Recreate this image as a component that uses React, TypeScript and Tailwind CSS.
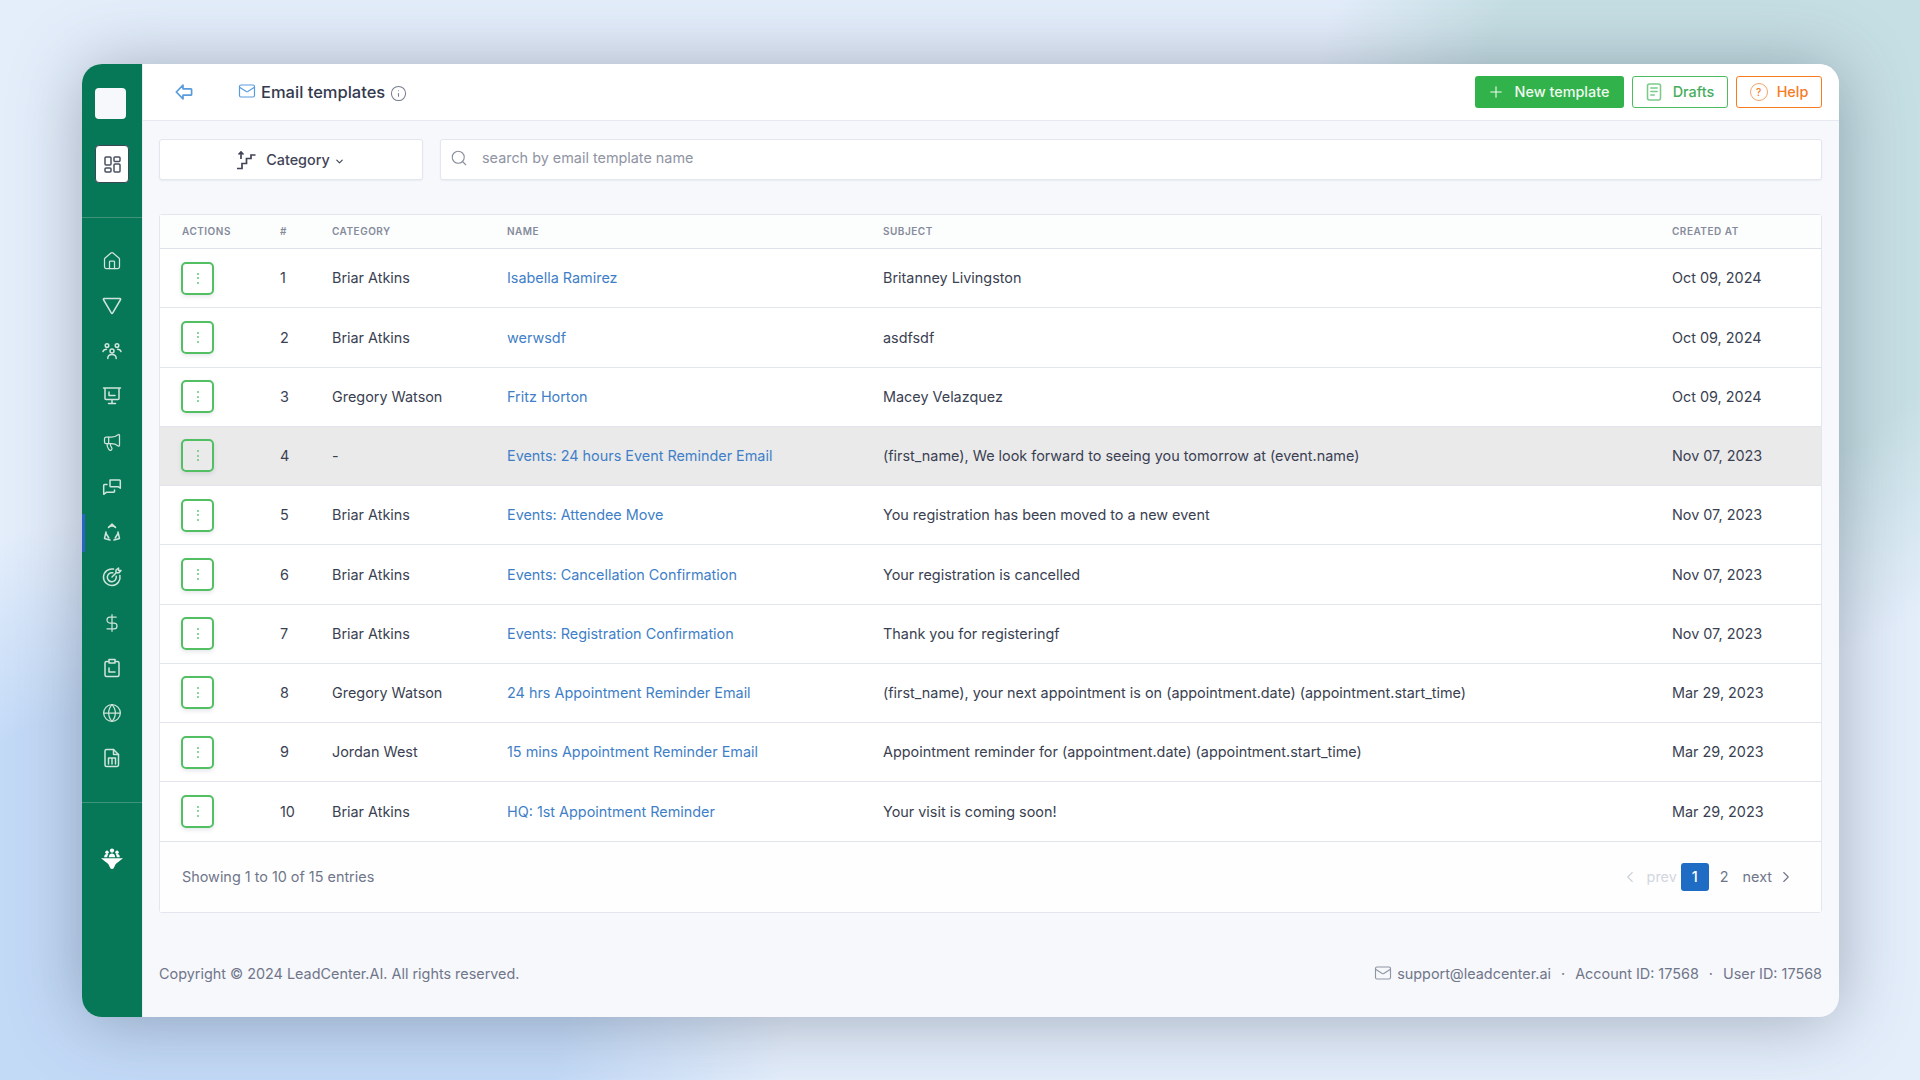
import { ChevronDown, ChevronLeft, ChevronRight, DollarSign, Globe, House, Info, Mail, Megaphone, Plus, Search } from 'lucide-react';

type Row = { id: number; category: string; name: string; subject: string; created: string; active?: boolean };

const ROWS: Row[] = [
  { id: 1, category: 'Briar Atkins', name: 'Isabella Ramirez', subject: 'Britanney Livingston', created: 'Oct 09, 2024' },
  { id: 2, category: 'Briar Atkins', name: 'werwsdf', subject: 'asdfsdf', created: 'Oct 09, 2024' },
  { id: 3, category: 'Gregory Watson', name: 'Fritz Horton', subject: 'Macey Velazquez', created: 'Oct 09, 2024' },
  { id: 4, category: '-', name: 'Events: 24 hours Event Reminder Email', subject: '(first_name), We look forward to seeing you tomorrow at (event.name)', created: 'Nov 07, 2023', active: true },
  { id: 5, category: 'Briar Atkins', name: 'Events: Attendee Move', subject: 'You registration has been moved to a new event', created: 'Nov 07, 2023' },
  { id: 6, category: 'Briar Atkins', name: 'Events: Cancellation Confirmation', subject: 'Your registration is cancelled', created: 'Nov 07, 2023' },
  { id: 7, category: 'Briar Atkins', name: 'Events: Registration Confirmation', subject: 'Thank you for registeringf', created: 'Nov 07, 2023' },
  { id: 8, category: 'Gregory Watson', name: '24 hrs Appointment Reminder Email', subject: '(first_name), your next appointment is on (appointment.date) (appointment.start_time)', created: 'Mar 29, 2023' },
  { id: 9, category: 'Jordan West', name: '15 mins Appointment Reminder Email', subject: 'Appointment reminder for (appointment.date) (appointment.start_time)', created: 'Mar 29, 2023' },
  { id: 10, category: 'Briar Atkins', name: 'HQ: 1st Appointment Reminder', subject: 'Your visit is coming soon!', created: 'Mar 29, 2023' },
];

const COLS = 'grid grid-cols-[98px_52px_175px_376px_789px_1fr] pl-[22px] items-center';

const stroke = { fill: 'none', stroke: 'currentColor', strokeWidth: 1.5, strokeLinecap: 'round', strokeLinejoin: 'round' } as const;

const TriangleIcon = () => (
  <svg width="20" height="18" viewBox="0 0 20 18" {...stroke}><path d="M2 1.500h16a.7.7 0 0 1 .6 1l-8 13.600a.7.7 0 0 1-1.200 0l-8-13.600a.7.7 0 0 1 .6-1z" /></svg>
);
const TeamIcon = () => (
  <svg width="20" height="18" viewBox="0 0 20 18" {...stroke}>
    <circle cx="5" cy="3.500" r="1.800" /><circle cx="15" cy="3.500" r="1.800" /><circle cx="10" cy="9" r="2" />
    <path d="M1 9.500c.5-1.500 1.800-2.300 3.500-2.300M19 9.500c-.5-1.500-1.800-2.300-3.500-2.300M5.800 16.500c0-2.500 1.800-4 4.200-4s4.200 1.500 4.200 4" />
  </svg>
);
const ScreenIcon = () => (
  <svg width="20" height="20" viewBox="0 0 20 20" {...stroke}>
    <path d="M1.500 2h17M3 2v10.500a1 1 0 0 0 1 1h12a1 1 0 0 0 1-1V2M10 13.500V17M6.500 17.500h7M7 6v3.500h6" />
  </svg>
);
const ChatIcon = () => (
  <svg width="20" height="20" viewBox="0 0 20 20" {...stroke}>
    <path d="M8 3h9.500a.8.800 0 0 1 .8.800v7.400l-2.300-1.500H8.800a.8.800 0 0 1-.8-.8z" />
    <path d="M5 7.500H2.500a.8.800 0 0 0-.8.800v9l2.600-2h7.400a.8.800 0 0 0 .8-.8v-1.500" />
  </svg>
);
const RecycleIcon = () => (
  <svg width="20" height="20" viewBox="0 0 20 20" {...stroke}>
    <path d="M6.500 5.500 10 2l3.500 3.500M4 10l-1.500 6.500L8 18M16 10l1.500 6.500L12 18" />
    <path d="M7 4.800c1.800-.9 4.200-.9 6 0M4 11.500 6.800 16M16 11.500 13.200 16" />
  </svg>
);
const TargetIcon = () => (
  <svg width="20" height="20" viewBox="0 0 20 20" {...stroke}>
    <path d="M11.500 2.100A8.300 8.300 0 1 0 17.900 8.500M10.800 5.800A4.500 4.500 0 1 0 14.200 9.200" />
    <path d="M10 10l4.500-4.500M14 3v2.800h3l2-2.300h-2.500V1z" />
  </svg>
);
const ClipboardIcon = () => (
  <svg width="18" height="20" viewBox="0 0 18 20" {...stroke}>
    <path d="M5.500 3.500H3.500a1.500 1.500 0 0 0-1.500 1.500v12a1.500 1.500 0 0 0 1.500 1.500h11a1.500 1.500 0 0 0 1.500-1.500V5a1.500 1.500 0 0 0-1.500-1.500h-2" />
    <path d="M6 1.500h6v3.500H6zM6 10v4h6" />
  </svg>
);
const SheetIcon = () => (
  <svg width="18" height="20" viewBox="0 0 18 20" {...stroke}>
    <path d="M3.500 1.500h7l5 5v10.500a1.500 1.500 0 0 1-1.500 1.500H3.500a1.500 1.500 0 0 1-1.500-1.500V3a1.500 1.500 0 0 1 1.500-1.500z" />
    <path d="M10.500 1.500v5h5M5.500 16V10h7v6M9 10v6" />
  </svg>
);
const LogoIcon = () => (
  <svg width="22" height="21" viewBox="0 0 22 21" fill="white">
    <circle cx="11" cy="2.600" r="2.100" /><circle cx="6" cy="4.300" r="1.700" /><circle cx="16" cy="4.300" r="1.700" />
    <path d="M7.800 9.300c0-2.600 1.400-3.900 3.200-3.900s3.200 1.300 3.200 3.900zM3.200 9.300c0-2 1-3.200 2.700-3.200.5 0 1 .1 1.300.3-.7.800-1 1.800-1 2.900zM18.800 9.300c0-2-1-3.200-2.700-3.200-.5 0-1 .1-1.300.3.700.8 1 1.800 1 2.900z" />
    <path d="M0 10.300h22l-7.300 5.700-2.200 4.500-1.500.5-1.500-.5L7.300 16z" />
  </svg>
);
const BackArrow = () => (
  <svg width="18" height="16" viewBox="0 0 18 16" fill="none" stroke="#5a9bdc" strokeWidth="1.700" strokeLinejoin="round">
    <path d="M8 1.200 1.300 8 8 14.800v-3.600h7.800a.8.800 0 0 0 .8-.8V5.600a.8.800 0 0 0-.8-.8H8z" />
  </svg>
);
const StairsIcon = () => (
  <svg width="20" height="20" viewBox="0 0 20 20" fill="none" stroke="#3f4456" strokeWidth="1.700">
    <path d="M1 18.500h5v-5h4.500v-5H15V5h4.500" /><path d="M5 9V2M2.500 4.500 5 2l2.500 2.500" />
  </svg>
);
const DraftIcon = () => (
  <svg width="16" height="18" viewBox="0 0 16 18" fill="none" stroke="#7ccb8a" strokeWidth="1.600" strokeLinecap="round">
    <rect x="1.500" y="1" width="13" height="16" rx="2" /><path d="M4.800 5h6.400M4.800 8.500h6.400M4.800 12h3.500" />
  </svg>
);
const DotsButton = () => (
  <button className="-ml-px flex h-[33px] w-[33px] flex-col items-center justify-center gap-[2.500px] rounded-[5px] border-2 border-[#52bf63] shadow-[0_2px_4px_rgba(40,60,80,0.12)]">
    <span className="h-[2px] w-[2px] rounded-full bg-[#63c976]" />
    <span className="h-[2px] w-[2px] rounded-full bg-[#63c976]" />
    <span className="h-[2px] w-[2px] rounded-full bg-[#63c976]" />
  </button>
);

const NAV_ICONS = [
  <House key="home" size={20} strokeWidth={1.5} />,
  <TriangleIcon key="tri" />,
  <TeamIcon key="team" />,
  <ScreenIcon key="screen" />,
  <Megaphone key="mega" size={20} strokeWidth={1.5} />,
  <ChatIcon key="chat" />,
  <RecycleIcon key="rec" />,
  <TargetIcon key="target" />,
  <DollarSign key="usd" size={20} strokeWidth={1.5} />,
  <ClipboardIcon key="clip" />,
  <Globe key="globe" size={20} strokeWidth={1.5} />,
  <SheetIcon key="sheet" />,
];

const Sidebar = () => (
  <aside className="relative flex w-[60px] shrink-0 flex-col bg-[#077857] text-[#cfe4da]">
    <div className="ml-[13px] mt-[24px] h-[31px] w-[31px] rounded-[4px] bg-[#f6f8fc]" />
    <div className="ml-[13px] mt-[26px] flex h-[38px] w-[34px] items-center justify-center rounded-[4px] border border-[#3f4456] bg-white">
      <svg width="17" height="17" viewBox="0 0 17 17" fill="none" stroke="#4a5062" strokeWidth="1.500">
        <rect x="1" y="1" width="6" height="8" rx="1" /><rect x="10" y="1" width="6" height="4.500" rx="1" />
        <rect x="1" y="12" width="6" height="4" rx="1" /><rect x="10" y="8" width="6" height="8" rx="1" />
      </svg>
    </div>
    <div className="mt-[34px] border-t border-[#3f9379]" />
    <nav className="flex flex-col items-center pr-[1px] pt-[20px]">
      {NAV_ICONS.map((icon) => (
        <div key={icon.key} className="flex h-[45.250px] items-center justify-center">{icon}</div>
      ))}
    </nav>
    <div className="mt-[21px] border-t border-[#3f9379]" />
    <div className="flex flex-1 items-start justify-center pt-[45px]"><LogoIcon /></div>
    <div className="absolute left-0 top-[450px] h-[38px] w-[3px] bg-[#2c62c4]" />
  </aside>
);

export default function App() {
  return (
    <div className="h-[1080px] w-[1920px] overflow-hidden bg-[radial-gradient(ellipse_420px_500px_at_1730px_170px,#c6dfe4_62%,transparent_100%),radial-gradient(ellipse_600px_500px_at_190px_1010px,#c3daf7_62%,transparent_100%),linear-gradient(#e4eefb,#e4eefb)] pl-[82px] pt-[64px] font-['Inter',sans-serif]">
      <div className="flex h-[953px] w-[1757px] overflow-hidden rounded-[20px] bg-[#f7f8fc] shadow-[0_3px_70px_0_rgba(60,70,90,0.4)]">
        <Sidebar />
        <main className="flex min-w-0 flex-1 flex-col border-l border-[#e8ecf2]">
          <header className="flex h-[57px] shrink-0 items-center border-b border-[#e6e9f0] bg-white pr-[17px]">
            <div className="ml-[32px]"><BackArrow /></div>
            <Mail size={18} strokeWidth={1.600} className="mb-[3px] ml-[45px] text-[#5a9bdc]" />
            <h1 className="ml-[5px] mt-[1px] text-[16.500px] font-medium text-[#343a4e]">Email templates</h1>
            <Info size={17} strokeWidth={1.500} className="ml-[5px] mt-[3px] text-[#777d8c]" />
            <div className="ml-auto flex gap-[8px] text-[14.400px] font-medium">
              <button className="flex h-[32px] w-[149px] items-center justify-center gap-[10px] rounded-[3px] bg-[#32b24a] pr-[3px] text-[#eef9f0]">
                <Plus size={18} strokeWidth={1.500} />New template
              </button>
              <button className="flex h-[32px] w-[96px] items-center justify-center gap-[11px] rounded-[3px] border border-[#4dbb5e] bg-white text-[#47ad5d]">
                <DraftIcon />Drafts
              </button>
              <button className="flex h-[32px] w-[86px] items-center justify-center gap-[9px] rounded-[3px] border border-[#f77b1f] bg-white text-[#f77b1f]">
                <span className="flex h-[18px] w-[18px] items-center justify-center rounded-full border-[1.500px] border-[#f5a468] text-[10px] leading-none">?</span>Help
              </button>
            </div>
          </header>

          <div className="flex flex-1 flex-col pl-[16px] pr-[17px]">
            <div className="mt-[18px] flex gap-[17px]">
              <button className="flex h-[41px] w-[264px] items-center justify-center rounded-[3px] border border-[#e3e6ed] bg-white pr-[1px] text-[14.400px] font-medium text-[#3f4456] shadow-[0_1px_2px_rgba(40,50,70,0.06)]">
                <StairsIcon />
                <span className="ml-[10px] mt-[1px]">Category</span>
                <ChevronDown size={11} strokeWidth={2.500} className="ml-[4px] mt-[3px]" />
              </button>
              <div className="flex h-[41px] flex-1 items-center rounded-[3px] border border-[#e3e6ed] bg-white pb-[3px] pl-[9px] text-[14.400px] text-[#8f94a3] shadow-[0_1px_2px_rgba(40,50,70,0.06)]">
                <Search size={18} strokeWidth={1.500} className="text-[#8a909e]" />
                <span className="ml-[14px]">search by email template name</span>
              </div>
            </div>

            <section className="mt-[34px] rounded-[3px] border border-[#e3e6ed] bg-white text-[14.400px] text-[#3a3f52]">
              <div className={`${COLS} h-[34px] border-b border-[#dfe2ea] bg-[#fcfdfd] text-[10px] font-semibold tracking-[0.5px] text-[#858b9b]`}>
                <div>ACTIONS</div><div>#</div><div>CATEGORY</div><div>NAME</div><div>SUBJECT</div><div>CREATED AT</div>
              </div>
              {ROWS.map((row) => (
                <div key={row.id} className={`${COLS} h-[59.250px] border-b border-[#e3e5ec] ${row.active ? 'bg-[#eaeaeb]' : 'bg-white'}`}>
                  <DotsButton />
                  <div>{row.id}</div>
                  <div>{row.category}</div>
                  <div className="text-[#3f7fc7]">{row.name}</div>
                  <div>{row.subject}</div>
                  <div>{row.created}</div>
                </div>
              ))}
              <div className="flex h-[70px] items-center justify-between bg-[#fefefe] pl-[22px] pr-[26px] text-[#70768a]">
                <span>Showing 1 to 10 of 15 entries</span>
                <div className="flex items-center">
                  <ChevronLeft size={18} strokeWidth={1.500} className="text-[#cdd1da]" />
                  <span className="ml-[8px] mr-[4px] text-[#d3d6de]">prev</span>
                  <span className="flex h-[28px] w-[28px] items-center justify-center rounded-[3px] bg-[#1f6cc4] font-medium text-white">1</span>
                  <span className="ml-[11px]">2</span>
                  <span className="ml-[14px]">next</span>
                  <ChevronRight size={18} strokeWidth={1.500} className="ml-[5px]" />
                </div>
              </div>
            </section>

            <footer className="mt-[50px] flex items-center justify-between text-[14.400px] text-[#70768a]">
              <span>Copyright © 2024 LeadCenter.AI. All rights reserved.</span>
              <div className="flex items-center">
                <Mail size={18} strokeWidth={1.500} className="mr-[5px] text-[#8d96a3]" />
                <span>support@leadcenter.ai</span>
                <span className="mx-[10px]">·</span>
                <span>Account ID: 17568</span>
                <span className="mx-[10px]">·</span>
                <span>User ID: 17568</span>
              </div>
            </footer>
          </div>
        </main>
      </div>
    </div>
  );
}
